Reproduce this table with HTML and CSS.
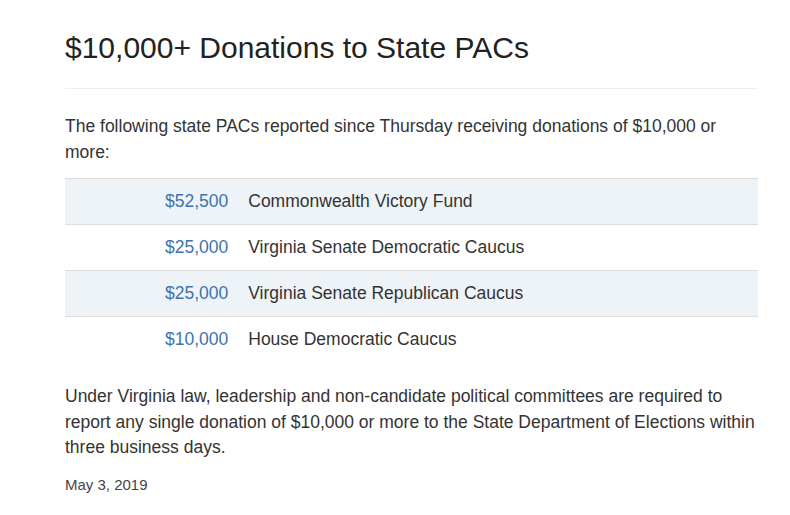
FILE: index.html
```html
<!DOCTYPE html>
<html>
<head>
<meta charset="utf-8">
<link rel="stylesheet" href="styles.css">
</head>
<body>
<div class="container">
  <h2 class="title">$10,000+ Donations to State PACs</h2>
  <hr class="rule">
  <p class="intro">The following state PACs reported since Thursday receiving donations of $10,000 or more:</p>
  <table class="donations">
    <tr class="odd"><td class="amount">$52,500</td><td class="name">Commonwealth Victory Fund</td></tr>
    <tr><td class="amount">$25,000</td><td class="name">Virginia Senate Democratic Caucus</td></tr>
    <tr class="odd"><td class="amount">$25,000</td><td class="name">Virginia Senate Republican Caucus</td></tr>
    <tr><td class="amount">$10,000</td><td class="name">House Democratic Caucus</td></tr>
  </table>
  <p class="note">Under Virginia law, leadership and non-candidate political committees are required to report any single donation of $10,000 or more to the State Department of Elections within three business days.</p>
  <p class="date">May 3, 2019</p>
</div>
</body>
</html>
```

FILE: styles.css
```css
html, body {
  margin: 0;
  padding: 0;
  background: #fff;
}
body {
  font-family: "Liberation Sans", Arial, sans-serif;
  font-size: 17.5px;
  line-height: 25.6px;
  color: #333;
}
.container {
  width: 693px;
  margin-left: 65px;
  padding-top: 31px;
}
.title {
  font-size: 30px;
  font-weight: 400;
  line-height: 33px;
  margin: 0;
  color: #222;
}
.rule {
  border: 0;
  border-top: 1px solid #eee;
  margin: 24px 0 25px 0;
}
.intro {
  margin: 0 0 13px 0;
}
.donations {
  width: 100%;
  border-collapse: collapse;
  margin-bottom: 22px;
}
.donations td {
  padding: 10px;
  border-top: 1px solid #ddd;
  line-height: 25px;
}
.donations tr.odd td {
  background: #eef3f7;
}
.amount {
  width: 25%;
  text-align: right;
  color: #3d74ad;
  box-sizing: border-box;
}
.note {
  margin: 0 0 11px 0;
}
.date {
  margin: 0;
  font-size: 15px;
  color: #444;
}
```
